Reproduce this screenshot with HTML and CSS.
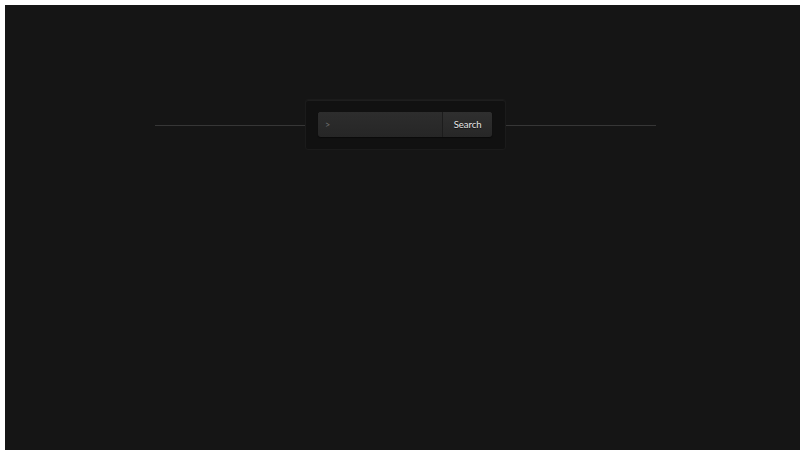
FILE: index.html
```html
<!DOCTYPE html>
<html>
<head>
<meta charset="utf-8">
<link rel="stylesheet" href="styles.css">
</head>
<body>
<div class="stage">
  <div class="rule"></div>
  <form class="panel">
    <div class="group">
      <div class="field"><span class="prompt">&gt;</span></div>
      <button type="button" class="btn">Search</button>
    </div>
  </form>
  <div class="rule"></div>
</div>
</body>
</html>
```
FILE: styles.css
```css
html {
  background: #ffffff;
  height: 100%;
}
body {
  margin: 5px 0 0 5px;
  background: #151515;
  height: 445px;
  font-family: Lato, "Open Sans", sans-serif;
}
.stage {
  display: flex;
  align-items: center;
  width: 501px;
  margin-left: 150px;
  padding-top: 94px;
}
.rule {
  flex: 1;
  height: 1px;
  margin-top: 2px;
  background: #363636;
}
.panel {
  box-sizing: border-box;
  width: 201px;
  height: 51px;
  margin: 0;
  padding: 12px 13px 13px 12px;
  background: #111111;
  border: 1px solid #1b1b1b;
  border-radius: 3px;
  box-shadow: inset 0 1px 0 #1e1e1e;
}
.group {
  display: flex;
  height: 25px;
  border-radius: 3px;
  overflow: hidden;
  box-shadow: 0 1px 1px #0a0a0a, inset 0 1px 0 #333333;
}
.field {
  width: 125px;
  display: flex;
  align-items: center;
  padding-left: 7px;
  box-sizing: border-box;
  background: linear-gradient(#2d2d2d, #262626);
}
.prompt {
  color: #707070;
  font-size: 9px;
}
.btn {
  width: 50px;
  margin: 0;
  padding: 0 0 1px 0;
  border: 0;
  border-left: 1px solid #1c1c1c;
  background: linear-gradient(#2f2f2f, #272727);
  color: #e6e6e6;
  font-family: Lato, "Open Sans", sans-serif;
  font-size: 9.5px;
  text-shadow: 0 1px 0 #111;
}
```
